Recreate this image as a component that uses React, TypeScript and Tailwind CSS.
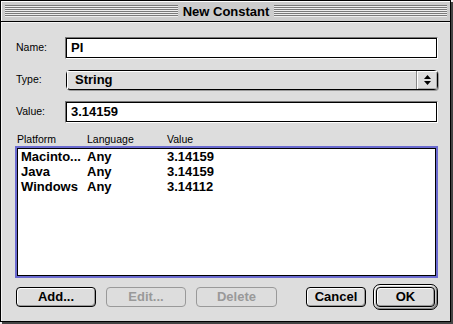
import React from 'react';

const FONT = "font-['Liberation_Sans',Arial,sans-serif]";

function Stripes() {
  return (
    <div className="flex-1 h-[12px] bg-[repeating-linear-gradient(#7a7a7a_0px,#7a7a7a_1px,#eeeeee_1px,#eeeeee_2px)]" />
  );
}

function TextField({ value }: { value: string }) {
  return (
    <div className="flex-1 h-[22px] border-t border-l border-[#777777] border-b-white border-r-white border-b border-r">
      <div className="h-full border border-black bg-white flex items-center pl-[4px] text-[13px] font-bold text-black">
        {value}
      </div>
    </div>
  );
}

function PopupArrows() {
  return (
    <svg width="9" height="12" viewBox="0 0 9 12">
      <path d="M4.5 1 L8 5 L1 5 Z" fill="black" />
      <path d="M1 7 L8 7 L4.5 11 Z" fill="black" />
    </svg>
  );
}

function PushButton({ label, disabled, width }: { label: string; disabled?: boolean; width: string }) {
  return (
    <div
      className={`${width} h-[20px] rounded-[4px] flex items-center justify-center text-[13px] font-bold ${
        disabled
          ? 'border border-[#999999] text-[#999999] bg-[#dddddd]'
          : 'border border-black text-black bg-[#dddddd] shadow-[inset_1px_1px_0_#ffffff,inset_-1px_-1px_0_#999999]'
      }`}
    >
      {label}
    </div>
  );
}

const ROWS = [
  { platform: 'Macinto...', language: 'Any', value: '3.14159' },
  { platform: 'Java', language: 'Any', value: '3.14159' },
  { platform: 'Windows', language: 'Any', value: '3.14112' },
];

export default function App() {
  return (
    <div className={`w-[453px] h-[324px] bg-[#eeeeee] ${FONT}`}>
      <div className="w-[451px] h-[322px] border border-black bg-[#dddddd] shadow-[2px_2px_0_#444444] flex flex-col">
        {/* Title bar */}
        <div className="h-[21px] bg-[#cccccc] border-b border-black flex items-center pl-[4px] pr-[3px] gap-[4px] shadow-[inset_1px_1px_0_#ffffff]">
          <Stripes />
          <span className="text-[13px] font-bold text-black leading-none px-[1px]">New Constant</span>
          <Stripes />
        </div>

        {/* Content */}
        <div className="flex-1 flex flex-col pl-[14px] pr-[12px] pt-[15px] shadow-[inset_1px_1px_0_#f4f4f4]">
          <div className="flex items-center">
            <span className="w-[50px] pl-[1px] text-[10.5px] text-black">Name:</span>
            <TextField value="PI" />
          </div>

          <div className="flex items-center mt-[11px]">
            <span className="w-[50px] pl-[1px] text-[10.5px] text-black">Type:</span>
            <div className="flex-1 h-[20px] ml-[1px] rounded-[4px] border border-black bg-[#dddddd] flex shadow-[1px_1px_0_#999999]">
              <div className="flex-1 flex items-center pl-[8px] text-[13px] font-bold text-black shadow-[inset_1px_1px_0_#ffffff]">
                String
              </div>
              <div className="w-[21px] border-l border-[#888888] flex items-center justify-center shadow-[inset_1px_1px_0_#ffffff,inset_-1px_-1px_0_#aaaaaa]">
                <PopupArrows />
              </div>
            </div>
          </div>

          <div className="flex items-center mt-[11px]">
            <span className="w-[50px] pl-[1px] text-[10.5px] text-black">Value:</span>
            <TextField value="3.14159" />
          </div>

          <div className="flex mt-[10px] leading-[12px] text-[10.5px] text-black">
            <span className="w-[72px] pl-[2px]">Platform</span>
            <span className="w-[80px]">Language</span>
            <span>Value</span>
          </div>

          <div className="mt-[1px] h-[132px] border-2 border-[#6a6ad0]">
            <div className="h-full border border-black bg-white pl-[3px]">
              {ROWS.map((r) => (
                <div key={r.platform} className="flex text-[13px] font-bold text-black leading-[15px]">
                  <span className="w-[66px]">{r.platform}</span>
                  <span className="w-[80px]">{r.language}</span>
                  <span>{r.value}</span>
                </div>
              ))}
            </div>
          </div>

          <div className="flex items-center mt-[6px] h-[26px] pl-[1px]">
            <PushButton label="Add..." width="w-[80px]" />
            <div className="ml-[10px]">
              <PushButton label="Edit..." width="w-[80px]" disabled />
            </div>
            <div className="ml-[10px]">
              <PushButton label="Delete" width="w-[81px]" disabled />
            </div>
            <div className="ml-[29px]">
              <PushButton label="Cancel" width="w-[60px]" />
            </div>
            <div className="ml-[7px] rounded-[7px] border border-black p-[2px] bg-[#cccccc] shadow-[inset_1px_1px_0_#ffffff,inset_-1px_-1px_0_#888888]">
              <PushButton label="OK" width="w-[59px]" />
            </div>
          </div>
        </div>
      </div>
    </div>
  );
}
